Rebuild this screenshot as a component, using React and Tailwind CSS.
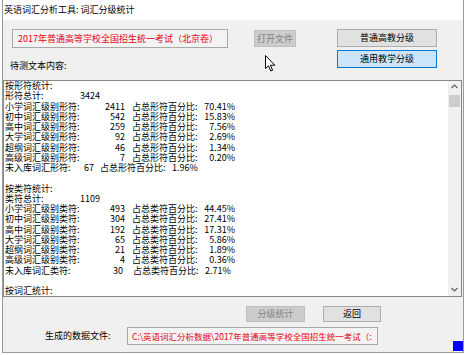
import React from "react";

const PCT = {
  xing: "占总形符百分比:",
  lei: "占总类符百分比:",
};

const groups = [
  {
    head: "按形符统计:",
    totalLabel: "形符总计:",
    total: "3424",
    pct: PCT.xing,
    rows: [
      ["小学词汇级别形符:", "2411", "70.41%"],
      ["初中词汇级别形符:", "542", "15.83%"],
      ["高中词汇级别形符:", "259", "7.56%"],
      ["大学词汇级别形符:", "92", "2.69%"],
      ["超纲词汇级别形符:", "46", "1.34%"],
      ["高级词汇级别形符:", "7", "0.20%"],
    ],
    last: ["未入库词汇形符:", "67", "1.96%"],
    wide: false,
  },
  {
    head: "按类符统计:",
    totalLabel: "类符总计:",
    total: "1109",
    pct: PCT.lei,
    rows: [
      ["小学词汇级别类符:", "493", "44.45%"],
      ["初中词汇级别类符:", "304", "27.41%"],
      ["高中词汇级别类符:", "192", "17.31%"],
      ["大学词汇级别类符:", "65", "5.86%"],
      ["超纲词汇级别类符:", "21", "1.89%"],
      ["高级词汇级别类符:", "4", "0.36%"],
    ],
    last: ["未入库词汇类符:", "30", "2.71%"],
    wide: true,
  },
];

function Cursor() {
  return (
    <svg className="absolute left-[265px] top-[55px]" width="11" height="17" viewBox="0 0 11 17">
      <path d="M0.5 0.5 L0.5 13.5 L3.5 10.8 L5.8 16 L7.6 15.2 L5.4 10.2 L9.8 10.2 Z" fill="#fff" stroke="#000" strokeWidth="1" strokeLinejoin="round" />
    </svg>
  );
}

function Group({ g }) {
  return (
    <>
      <div>{g.head}</div>
      <div className="flex">
        <span className="w-[75px] whitespace-nowrap">{g.totalLabel}</span>
        <span>{g.total}</span>
      </div>
      {g.rows.map(([label, n, p]) => (
        <div key={label} className="flex whitespace-nowrap">
          <span className="w-[80px]">{label}</span>
          <span className="w-[40px] text-right">{n}</span>
          <span className="ml-[7px] w-[66px]">{g.pct}</span>
          <span className="w-[37px] text-right">{p}</span>
        </div>
      ))}
      <div className="flex whitespace-nowrap">
        <span className="w-[75px]">{g.last[0]}</span>
        <span className={g.wide ? "w-[43px] text-right" : "w-[14px] text-right"}>{g.last[1]}</span>
        <span className={g.wide ? "ml-[10px] w-[72px]" : "ml-[6px] w-[72px]"}>{g.pct}</span>
        <span>{g.last[2]}</span>
      </div>
      <div>&nbsp;</div>
    </>
  );
}

export default function App() {
  return (
    <div className="relative w-[466px] h-[355px] bg-white overflow-hidden font-['Noto_Sans_CJK_SC',sans-serif] text-[9px] text-black">
      <div className="ml-[2px] w-[462px] h-[353px] border-x border-b border-[#9a9a9a] bg-[#f0f0f0] flex flex-col">
        {/* title */}
        <div className="h-[20px] bg-white flex items-center pl-[1px] text-[9px]">
          英语词汇分析工具: 词汇分级统计
        </div>

        {/* top panel */}
        <div className="h-[60px] flex">
          <div className="ml-[7px] w-[218px] flex flex-col">
            <div className="ml-[2px] mt-[9px] w-[216px] h-[19px] border border-[#a8a8a8] bg-[#f3f3f3] flex items-center pl-[5px] text-[#e60012] text-[9px] whitespace-nowrap overflow-hidden">
              2017年普通高等学校全国招生统一考试（北京卷）
            </div>
            <div className="mt-[13px] leading-[10px]">待测文本内容:</div>
          </div>
          <div className="ml-[26px] mt-[10px] w-[42px] h-[17px] border border-[#bfbfbf] bg-[#cccccc] text-[#838383] flex items-center justify-center">
            打开文件
          </div>
          <div className="ml-[41px] mt-[9px] flex flex-col gap-[3px]">
            <div className="w-[100px] h-[18px] border border-[#adadad] bg-[#e1e1e1] flex items-center justify-center">
              普通高教分级
            </div>
            <div className="w-[100px] h-[18px] border border-[#0078d7] bg-[#cce4f7] flex items-center justify-center">
              通用教学分级
            </div>
          </div>
        </div>

        {/* text area */}
        <div className="w-[459px] h-[217px] border border-[#828790] bg-white flex overflow-hidden">
          <div className="flex-1 overflow-hidden pl-[1px] leading-[10.25px] text-[9px]">
            {groups.map((g) => (
              <Group key={g.head} g={g} />
            ))}
            <div>按词汇统计:</div>
          </div>
          <div className="w-[13px] bg-[#f0f0f0] flex flex-col items-center">
            <svg className="mt-[3px]" width="7" height="5" viewBox="0 0 7 5">
              <path d="M0.5 4 L3.5 1 L6.5 4" fill="none" stroke="#606060" strokeWidth="1.2" />
            </svg>
            <div className="mt-[6px] w-[11px] h-[12px] bg-[#cdcdcd]" />
            <div className="flex-1" />
            <svg className="mb-[4px]" width="7" height="5" viewBox="0 0 7 5">
              <path d="M0.5 1 L3.5 4 L6.5 1" fill="none" stroke="#606060" strokeWidth="1.2" />
            </svg>
          </div>
        </div>

        {/* bottom panel */}
        <div className="flex-1 flex flex-col">
          <div className="mt-[9px] pl-[243px] flex gap-[18px]">
            <div className="w-[59px] h-[16px] border border-[#bfbfbf] bg-[#cccccc] text-[#838383] flex items-center justify-center">
              分级统计
            </div>
            <div className="w-[58px] h-[16px] border border-[#adadad] bg-[#e1e1e1] flex items-center justify-center">
              返回
            </div>
          </div>
          <div className="mt-[5px] flex items-start">
            <div className="ml-[42px] w-[82px] h-[18px] flex items-center">生成的数据文件:</div>
            <div className="w-[251px] h-[18px] border border-[#a8a8a8] bg-[#f3f3f3] flex items-center pl-[4px] text-[#e60012] text-[8.5px] whitespace-nowrap overflow-hidden">
              C:\英语词汇分析数据\2017年普通高等学校全国招生统一考试（:
            </div>
            <div className="ml-auto mt-[14px] w-[10px] h-[10px] bg-[#0000ff]" />
          </div>
        </div>
      </div>
      <Cursor />
    </div>
  );
}
